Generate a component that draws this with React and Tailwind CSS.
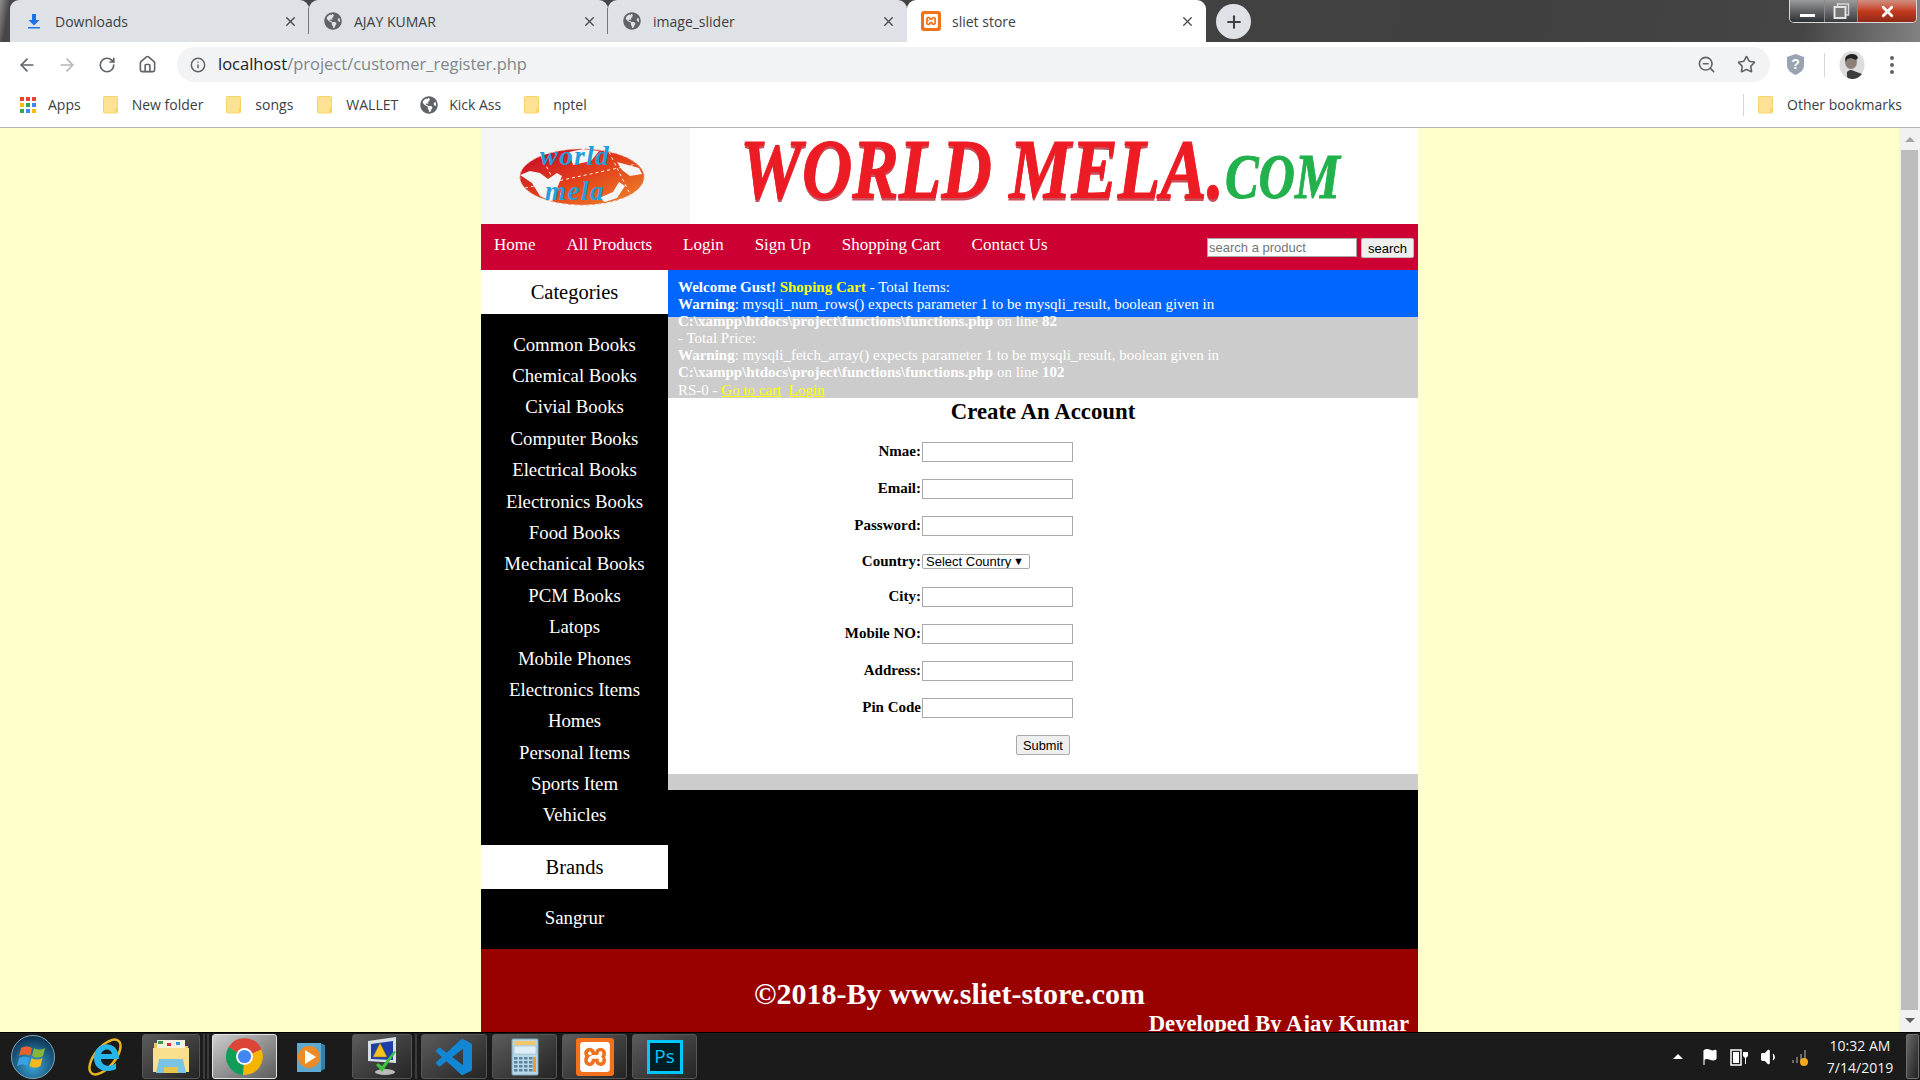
import React from 'react';
import { ArrowLeft, ArrowRight, RotateCw, Home, Info, Star, X, Plus, Flag, Volume1, ZoomOut } from 'lucide-react';
import { FaGlobeAmericas } from 'react-icons/fa';
import { SiXampp } from 'react-icons/si';

const categories = [
    'Common Books', 'Chemical Books', 'Civial Books', 'Computer Books', 'Electrical Books', 'Electronics Books',
    'Food Books', 'Mechanical Books', 'PCM Books', 'Latops', 'Mobile Phones', 'Electronics Items',
    'Homes', 'Personal Items', 'Sports Item', 'Vehicles',
];

const fields = [
    { label: 'Nmae:' },
    { label: 'Email:' },
    { label: 'Password:' },
    { label: 'Country:', select: true },
    { label: 'City:' },
    { label: 'Mobile NO:' },
    { label: 'Address:' },
    { label: 'Pin Code' },
];

const Folder = () => (
    <svg width="16" height="19" viewBox="0 0 16 19" className="shrink-0">
        <path d="M1.500 1.500h12a1 1 0 0 1 1 1V17a1 1 0 0 1-1 1h-12a1 1 0 0 1-1-1V2.500a1 1 0 0 1 1-1z" fill="#fde293" stroke="#f6d568" />
        <path d="M12.500 13h2v4h-2z" fill="#f9d25a" />
    </svg>
);

const Download = () => (
    <svg width="18" height="16" viewBox="0 0 18 16" className="shrink-0">
        <path d="M7 1h4v6h3.500L9 12.500 3.500 7H7z" fill="#1a73e8" />
        <path d="M3 14h12v1.500H3z" fill="#1a73e8" />
    </svg>
);

const XamppBadge = ({ size = 20, icon = 14 }) => (
    <div className="flex shrink-0 items-center justify-center rounded-[3px] bg-[#f2711c]" style={{ width: size, height: size }}>
        <SiXampp size={icon} color="#fff" />
    </div>
);

const Tab = ({ icon, title, active, divider }) => (
    <div className={`relative flex h-[42px] w-[299px] shrink-0 items-center rounded-t-[9px] pr-[11px] ${active ? 'bg-white pl-[14px]' : 'bg-[#dee1e6] pl-[15px]'}`}>
        {icon}
        <span className={`flex-1 font-['Open_Sans'] text-[14px] text-[#3c4043] ${active ? 'ml-[11px]' : 'ml-[12px]'}`}>{title}</span>
        <X size={15} strokeWidth={2.2} className="text-[#4a4d50]" />
        {divider && <div className="absolute right-0 top-[8px] h-[26px] w-px bg-[#75787c]" />}
    </div>
);

const WindowControls = () => (
    <div className="ml-auto mr-[3px] flex h-[23px] w-[128px] self-start overflow-hidden rounded-b-[5px] border border-t-0 border-[#d8d8d8]">
        <div className="flex w-[35px] items-end justify-center border-r border-[#8a8a8a] bg-gradient-to-b from-[#9c9c9c] to-[#2e3136] pb-[5px]">
            <div className="h-[3px] w-[15px] bg-white" />
        </div>
        <div className="flex w-[33px] items-center justify-center border-r border-[#8a8a8a] bg-gradient-to-b from-[#9c9c9c] to-[#3a3c40]">
            <svg width="17" height="17" viewBox="0 0 17 17">
                <rect x="4.500" y="1" width="11" height="11" fill="none" stroke="#d6d6d6" strokeWidth="1.500" />
                <rect x="1.500" y="4" width="11" height="11" fill="#777" stroke="#e4e4e4" strokeWidth="2" />
            </svg>
        </div>
        <div className="flex flex-1 items-center justify-center bg-gradient-to-b from-[#cf8d80] via-[#c63a1e] to-[#8d2a17]">
            <X size={17} strokeWidth={4} className="text-white" />
        </div>
    </div>
);

const TabStrip = () => (
    <div className="flex h-[42px] shrink-0 bg-[linear-gradient(100deg,#8f8f8f_0px,#474747_10px,#404040_1500px,#454545_1780px,#8e8e8e_1920px)] pl-[10px]">
        <Tab icon={<Download />} title="Downloads" divider />
        <Tab icon={<FaGlobeAmericas size={18} color="#5f6368" />} title="AJAY KUMAR" divider />
        <Tab icon={<FaGlobeAmericas size={18} color="#5f6368" />} title="image_slider" />
        <Tab icon={<XamppBadge />} title="sliet store" active />
        <div className="ml-[10px] mt-[4px] flex h-[35px] w-[35px] items-center justify-center rounded-full bg-[#dee1e6]">
            <Plus size={20} strokeWidth={2.5} className="text-[#3c4043]" />
        </div>
        <WindowControls />
    </div>
);

const Toolbar = () => (
    <div className="flex h-[43px] shrink-0 items-center bg-white pl-[17px] pr-[11px] pt-[2px] text-[#5f6368]">
        <ArrowLeft size={20} strokeWidth={2} />
        <ArrowRight size={20} strokeWidth={2} className="ml-[20px] text-[#b4b7bb]" />
        <RotateCw size={18} strokeWidth={2.2} className="ml-[21px]" />
        <Home size={19} strokeWidth={2} className="ml-[22px]" />
        <div className="ml-[20px] flex h-[35px] w-[1593px] items-center rounded-full bg-[#f1f3f4] pl-[13px] pr-[14px]">
            <Info size={16} strokeWidth={2.2} />
            <span className="ml-[12px] flex-1 font-['Open_Sans'] text-[16.500px] text-[#80868b]">
                <span className="text-[#202124]">localhost</span>/project/customer_register.php
            </span>
            <ZoomOut size={19} strokeWidth={2} />
            <Star size={19} strokeWidth={2} className="ml-[21px]" />
        </div>
        <svg width="19" height="23" viewBox="0 0 19 23" className="ml-[16px]">
            <path d="M9.500 1L18 4v8c0 5-4 8-8.500 10C5 20 1 17 1 12V4z" fill="#9aa3b2" />
            <text x="9.500" y="16" textAnchor="middle" fontSize="14" fontWeight="700" fill="#fff" fontFamily="Liberation Sans, sans-serif">?</text>
        </svg>
        <div className="ml-[19px] h-[24px] w-px bg-[#d3d5d8]" />
        <svg width="26" height="28" viewBox="0 0 26 28" className="ml-[14px]">
            <ellipse cx="13" cy="14" rx="12.500" ry="14" fill="#dcdcdc" />
            <ellipse cx="12" cy="11" rx="6" ry="7" fill="#8c8079" />
            <path d="M6 8c1-6 12-7 13-1l-2 2-5-2-4 1-1 3z" fill="#222" />
            <path d="M8 21c3-3 5-2 7-1l8 3c-2 3-6 5-10 5-2 0-4-1-5-2z" fill="#3d3d3d" />
        </svg>
        <div className="ml-[25px] flex flex-col gap-[3px]">
            <div className="h-[4px] w-[4px] rounded-full bg-[#5f6368]" />
            <div className="h-[4px] w-[4px] rounded-full bg-[#5f6368]" />
            <div className="h-[4px] w-[4px] rounded-full bg-[#5f6368]" />
        </div>
    </div>
);

const AppsIcon = () => (
    <div className="grid h-[16px] w-[16px] grid-cols-3 gap-[2px]">
        {['#ea4335', '#ea4335', '#ea4335', '#fbbc04', '#34a853', '#4285f4', '#34a853', '#4285f4', '#fbbc04'].map((c, i) => (
            <div key={i} style={{ backgroundColor: c }} />
        ))}
    </div>
);

const Bookmark = ({ icon, label, className }) => (
    <div className={`flex items-center gap-[13px] ${className}`}>
        {icon}
        <span>{label}</span>
    </div>
);

const Bookmarks = () => (
    <div className="flex h-[43px] shrink-0 items-center border-b border-[#b4b4b4] bg-white pb-[3px] pl-[20px] pr-[18px] font-['Open_Sans'] text-[14px] text-[#3c4043]">
        <Bookmark icon={<AppsIcon />} label="Apps" className="!gap-[12px]" />
        <Bookmark icon={<Folder />} label="New folder" className="ml-[22px]" />
        <Bookmark icon={<Folder />} label="songs" className="ml-[23px]" />
        <Bookmark icon={<Folder />} label="WALLET" className="ml-[24px]" />
        <Bookmark icon={<FaGlobeAmericas size={18} color="#5f6368" />} label="Kick Ass" className="ml-[22px] !gap-[11px]" />
        <Bookmark icon={<Folder />} label="nptel" className="ml-[23px]" />
        <div className="ml-auto h-[22px] w-px bg-[#d3d5d8]" />
        <Bookmark icon={<Folder />} label="Other bookmarks" className="ml-[14px]" />
    </div>
);

const Logo = () => (
    <div className="h-[96px] w-[209px] shrink-0 bg-[#f5f5f5]">
        <svg width="209" height="96" viewBox="0 0 209 96">
            <defs>
                <linearGradient id="globeFill" x1="0" y1="0" x2="1" y2="1">
                    <stop offset="0" stopColor="#c4042c" />
                    <stop offset="0.5" stopColor="#e2401a" />
                    <stop offset="1" stopColor="#ef8a2a" />
                </linearGradient>
            </defs>
            <ellipse cx="101" cy="49" rx="62" ry="28" fill="url(#globeFill)" />
            <path d="M39 47l10-4 10 2 8 6 9-6 5 3-4 10-6 16-12-6-8-13zM88 24l14-3 16 2-8 10-18 4zM136 34l22 6 3 6-12 2-8-6zM118 70l14-6 6-10 6 4-8 12-12 4z" fill="#f5f5f5" />
            <path d="M60 28L82 70M128 24l22 44M44 60l112-24" fill="none" stroke="#f5f5f5" strokeDasharray="3 3" />
            <ellipse cx="101" cy="49" rx="62" ry="28" fill="none" stroke="#e9967a" strokeDasharray="3 3" />
            <text x="94" y="37" textAnchor="middle" fontSize="27" letterSpacing="1.500" fontStyle="italic" fontWeight="700" fill="#1f9fdc" fontFamily="Liberation Serif, serif">world</text>
            <text x="94" y="72" textAnchor="middle" fontSize="27" letterSpacing="1.500" fontStyle="italic" fontWeight="700" fill="#1f9fdc" fontFamily="Liberation Serif, serif">mela</text>
        </svg>
    </div>
);

const Header = () => (
    <div className="flex h-[96px] bg-white">
        <Logo />
        <div className="flex items-baseline whitespace-nowrap pl-[50px] font-['Liberation_Serif',serif] font-bold italic leading-none">
            <span className="inline-block w-[485px] origin-left scale-x-[0.83] text-[84px] text-[#ed1c24] [-webkit-text-stroke:1px_#ed1c24] [text-shadow:0_3px_0_#c9505a]">WORLD MELA.</span>
            <span className="inline-block w-[115px] origin-left scale-x-[0.8] text-[63px] text-[#22b14c] [-webkit-text-stroke:1px_#22b14c]">COM</span>
        </div>
    </div>
);

const NavBar = () => (
    <div className="flex h-[46px] items-center bg-[#cc0033] pl-[13px] pr-[4px] font-['Liberation_Serif',serif] text-[17px] text-white">
        <div className="flex gap-[31px] pb-[4px]">
            <span>Home</span>
            <span>All Products</span>
            <span>Login</span>
            <span>Sign Up</span>
            <span>Shopping Cart</span>
            <span>Contact Us</span>
        </div>
        <div className="ml-auto flex items-center gap-[4px] pt-[1px] font-['Liberation_Sans',sans-serif] text-[13px]">
            <input
                placeholder="search a product"
                className="h-[19px] w-[150px] border border-[#a9a9a9] bg-white px-px text-black placeholder:text-[#757575] focus:outline-none"
            />
            <button className="h-[20px] w-[53px] rounded-[2px] border border-[#bdbdbd] bg-[#efefef] text-[13px] text-black">search</button>
        </div>
    </div>
);

const SideHeading = ({ title }) => (
    <div className="flex h-[44px] items-center justify-center bg-white text-[20.500px] text-black">{title}</div>
);

const Sidebar = () => (
    <div className="w-[187px] shrink-0 bg-black text-center font-['Liberation_Serif',serif] text-[18.800px] text-white">
        <SideHeading title="Categories" />
        <div className="pt-[15px] pb-[14px]">
            {categories.map((c) => (
                <div key={c} className="flex h-[31.400px] items-center justify-center">{c}</div>
            ))}
        </div>
        <SideHeading title="Brands" />
        <div className="flex h-[58px] items-center justify-center">Sangrur</div>
    </div>
);

const CartInfo = () => (
    <>
        <div className="h-[47px] bg-[#0066ff] px-[10px] pt-[9px] font-['Liberation_Serif',serif] text-[15px] leading-[17.100px] text-white">
            <b>Welcome Gust!</b> <b className="text-[#ffff00]">Shoping Cart</b> - Total Items:
            <br />
            <b>Warning</b>: mysqli_num_rows() expects parameter 1 to be mysqli_result, boolean given in
            <br />
            <b>C:\xampp\htdocs\project\functions\functions.php</b> on line <b>82</b>
            <br />
            - Total Price:
            <br />
            <b>Warning</b>: mysqli_fetch_array() expects parameter 1 to be mysqli_result, boolean given in
            <br />
            <b>C:\xampp\htdocs\project\functions\functions.php</b> on line <b>102</b>
            <br />
            RS-0 - <a className="text-[#ffff00] underline">Go to cart</a>&nbsp; <a className="text-[#ffff00] underline">Login</a>
        </div>
        <div className="h-[81px] bg-[#cccccc]" />
    </>
);

const RegisterForm = () => (
    <div className="h-[376px] bg-white font-['Liberation_Serif',serif] text-black">
        <h1 className="text-center text-[22.800px] font-bold leading-[28px]">Create An Account</h1>
        <div className="pt-[16px]">
            {fields.map((f) => (
                <div key={f.label} className={`flex items-start ${f.select ? 'h-[34px]' : 'h-[37px]'}`}>
                    <label className={`w-[253px] text-right text-[15px] font-bold leading-[17px] ${f.select ? '' : 'pt-px'}`}>{f.label}</label>
                    {f.select ? (
                        <div className="relative ml-px mt-px">
                            <select className="block h-[15px] w-[108px] appearance-none rounded-[2px] border border-[#a9a9a9] bg-white pl-[3px] font-['Liberation_Sans',sans-serif] text-[13px] leading-[13px] focus:outline-none">
                                <option>Select Country</option>
                            </select>
                            <span className="absolute right-[6px] top-[2px] text-[11px] leading-[11px]">▼</span>
                        </div>
                    ) : (
                        <input className="ml-px h-[20px] w-[151px] border border-[#a9a9a9] bg-white focus:outline-none" />
                    )}
                </div>
            ))}
            <div className="pl-[348px]">
                <button className="block h-[20px] w-[54px] rounded-[2px] border border-[#a9a9a9] bg-[#efefef] font-['Liberation_Sans',sans-serif] text-[12.800px]">Submit</button>
            </div>
        </div>
    </div>
);

const Footer = () => (
    <div className="h-[120px] bg-[#990000] pt-[28px] font-['Liberation_Serif',serif] font-bold text-white">
        <div className="text-center text-[30px] leading-[34px]">©2018-By www.sliet-store.com</div>
        <div className="pr-[9px] text-right text-[22.700px] leading-[26px]">Developed By Ajay Kumar</div>
    </div>
);

const Scrollbar = () => (
    <div className="flex w-[21px] shrink-0 flex-col items-center bg-[#f1f1f1]">
        <div className="mt-[9px] h-0 w-0 border-x-[5px] border-b-[5px] border-x-transparent border-b-[#a3a3a3]" />
        <div className="mt-[8px] h-[860px] w-[17px] bg-[#bdbdbd]" />
        <div className="mt-[8px] h-0 w-0 border-x-[5px] border-t-[5px] border-x-transparent border-t-[#5f5f5f]" />
    </div>
);

const WinOrb = () => (
    <svg width="46" height="46" viewBox="0 0 46 46" className="shrink-0">
        <defs>
            <radialGradient id="orbFill" cx="0.5" cy="0.7" r="0.7">
                <stop offset="0" stopColor="#3aa6d8" />
                <stop offset="1" stopColor="#0b2f4c" />
            </radialGradient>
        </defs>
        <circle cx="23" cy="23" r="21.500" fill="url(#orbFill)" stroke="#7fa8bd" />
        <path d="M11 14c4-2 7-2 11 0l-2 8c-4-2-7-2-11 0z" fill="#e8632b" />
        <path d="M24 14c4 2 7 2 11 0l-2 8c-4 2-7 2-11 0z" fill="#89b53a" />
        <path d="M9 24c4-2 7-2 10.500 0l-2 8c-4-2-7-2-10.500 0z" fill="#3aa0e0" />
        <path d="M21.500 24c4 2 7 2 11 0l-2 8c-4 2-7 2-11 0z" fill="#f5b91e" />
    </svg>
);

const IeIcon = () => (
    <svg width="38" height="42" viewBox="0 0 38 42">
        <ellipse cx="19" cy="21" rx="10" ry="21" transform="rotate(40 19 21)" fill="none" stroke="#eab320" strokeWidth="2.500" />
        <path d="M33 23H15c0 7 9 9 15 4v6c-10 5-22 1-22-11 0-11 10-16 17-13 5 2 8 7 8 14zM15 18h11c-1-6-9-6-11 0z" fill="#27b5ea" />
    </svg>
);

const ExplorerIcon = () => (
    <svg width="38" height="36" viewBox="0 0 38 36">
        <path d="M2 4h13l2 3h19v25H2z" fill="#e9c766" />
        <rect x="5" y="1" width="28" height="8" fill="#f6f1dd" />
        <path d="M6 2h5v3H6z" fill="#3c9a4e" />
        <path d="M15 4h4v3h-4z" fill="#c33" />
        <path d="M24 3h4v3h-4z" fill="#39c" />
        <path d="M1 9h36v24H1z" fill="#f9e08f" />
        <path d="M7 20h24l3 14H4z" fill="#7cc4e6" />
        <path d="M12 28h14v6H12z" fill="#e8c64e" />
    </svg>
);

const ChromeIcon = () => (
    <svg width="37" height="37" viewBox="0 0 48 48">
        <path d="M24 24L3.200 12A24 24 0 0 1 46 15z" fill="#db4437" />
        <path d="M24 24L3.200 12A24 24 0 0 0 22 48z" fill="#0f9d58" />
        <path d="M24 24L46 15A24 24 0 0 1 22 48z" fill="#f4b400" />
        <circle cx="24" cy="24" r="11" fill="#fff" />
        <circle cx="24" cy="24" r="8.500" fill="#4285f4" />
    </svg>
);

const MediaIcon = () => (
    <svg width="32" height="34" viewBox="0 0 32 34">
        <path d="M25 3l5 2v24l-5 2z" fill="#3a7da8" />
        <rect x="2" y="3" width="24" height="29" fill="#5fa8cf" />
        <circle cx="14" cy="17" r="11" fill="#f08a24" />
        <path d="M10 10l11 7-11 7z" fill="#fff" />
    </svg>
);

const ActionCenterIcon = () => (
    <svg width="38" height="42" viewBox="0 0 38 42">
        <path d="M5 5l28-4v26l-28-2z" fill="#d8dee6" />
        <path d="M8 8l22-3v19l-22-1z" fill="#1f3fa8" />
        <path d="M17 7l7 14H10z" fill="#f6c21e" stroke="#8a6d00" strokeWidth="0.500" />
        <ellipse cx="22" cy="36" rx="10" ry="3" fill="#bbb" />
        <path d="M13 29l6 7 14-20-2-1-12 15-4-3z" fill="#3cc13c" />
    </svg>
);

const VsCodeIcon = () => (
    <svg width="36" height="36" viewBox="0 0 24 24">
        <path d="M23.150 2.587L18.210.21a1.494 1.494 0 0 0-1.705.29l-9.460 8.630-4.120-3.128a.999.999 0 0 0-1.276.057L.327 7.261A1 1 0 0 0 .326 8.740L3.899 12 .326 15.260a1 1 0 0 0 .001 1.479L1.650 17.940a.999.999 0 0 0 1.276.057l4.120-3.128 9.460 8.630a1.492 1.492 0 0 0 1.704.29l4.942-2.377A1.500 1.500 0 0 0 24 20.060V3.939a1.500 1.500 0 0 0-.850-1.352zm-5.146 14.861L10.826 12l7.178-5.448v10.896z" fill="#1487d4" />
    </svg>
);

const CalcIcon = () => (
    <svg width="28" height="38" viewBox="0 0 28 38">
        <rect x="1" y="1" width="26" height="36" rx="1" fill="#b9d7e8" stroke="#7ea6bd" />
        <rect x="3" y="3" width="22" height="4" fill="#f3c66a" />
        <rect x="3" y="8" width="22" height="8" fill="#dfeef6" stroke="#8fb0c4" strokeWidth="0.500" />
        <g fill="#58849f">
            {[19, 23, 27, 31].map((y) => [3, 8, 13, 18].map((x) => <rect key={`${x}-${y}`} x={x} y={y} width="3.500" height="2.500" />))}
        </g>
        <rect x="22" y="19" width="3" height="15" fill="#e89a3c" />
    </svg>
);

const PsIcon = () => (
    <div className="flex h-[34px] w-[36px] items-center justify-center border-[3px] border-[#00c8ff] bg-[#001d26] font-['Open_Sans'] text-[19px] leading-none text-[#00c8ff]">Ps</div>
);

const TaskButton = ({ children, className, bright }) => (
    <div className={`flex h-[45px] shrink-0 items-center justify-center rounded-[3px] border ${bright ? 'border-[#e4e4e4] bg-gradient-to-br from-[#cfcfcf] to-[#5c5c5c]' : 'border-[#555555] bg-gradient-to-br from-[#5c5c5c] to-[#252525]'} ${className}`}>
        {children}
    </div>
);

const Taskbar = () => (
    <div className="flex h-[48px] shrink-0 items-center border-t border-[#000000] bg-[#1b1b1b] pl-[10px]">
        <WinOrb />
        <div className="ml-[30px] flex w-[38px] justify-center"><IeIcon /></div>
        <TaskButton className="ml-[18px] w-[58px]"><ExplorerIcon /></TaskButton>
        <div className="ml-[3px] h-[45px] w-[2px] bg-[#3c3c3c]" />
        <div className="ml-[2px] h-[45px] w-[2px] bg-[#3c3c3c]" />
        <TaskButton bright className="ml-[3px] w-[65px]"><ChromeIcon /></TaskButton>
        <div className="ml-[18px] flex w-[32px] justify-center"><MediaIcon /></div>
        <TaskButton className="ml-[25px] w-[60px]"><ActionCenterIcon /></TaskButton>
        <div className="ml-[3px] h-[45px] w-[2px] bg-[#3c3c3c]" />
        <TaskButton className="ml-[4px] w-[66px]"><VsCodeIcon /></TaskButton>
        <TaskButton className="ml-[5px] w-[65px]"><CalcIcon /></TaskButton>
        <TaskButton className="ml-[5px] w-[65px]"><XamppBadge size={38} icon={30} /></TaskButton>
        <TaskButton className="ml-[5px] w-[65px]"><PsIcon /></TaskButton>
        <div className="ml-auto flex items-center text-white">
            <div className="h-0 w-0 border-x-[5px] border-b-[5px] border-x-transparent border-b-white" />
            <Flag size={18} fill="#fff" strokeWidth={1.500} className="ml-[18px]" />
            <svg width="19" height="19" viewBox="0 0 19 19" className="ml-[11px]">
                <rect x="1" y="3" width="10" height="15" fill="none" stroke="#fff" strokeWidth="1.500" />
                <rect x="3" y="5" width="6" height="11" fill="#fff" />
                <path d="M13 5h5v4l-2 2v6h-1v-6l-2-2z" fill="#fff" />
            </svg>
            <Volume1 size={20} fill="#fff" strokeWidth={1.500} className="ml-[11px]" />
            <svg width="20" height="20" viewBox="0 0 20 20" className="ml-[11px]">
                <path d="M1 13h2v3H1zM5 10h2v6H5zM9 7h2v9H9zM13 3h2v13h-2z" fill="#6a6a6a" />
                <circle cx="13" cy="15" r="4" fill="#f5a81c" />
            </svg>
            <div className="ml-[13px] w-[72px] text-center font-['Open_Sans'] text-[14px] leading-[22px] text-[#f2f2f2]">
                <div>10:32 AM</div>
                <div>7/14/2019</div>
            </div>
            <div className="ml-[10px] h-[45px] w-[13px] rounded-[2px] border border-[#6e6e6e] bg-gradient-to-br from-[#6a6a6a] to-[#222222]" />
            <div className="w-px" />
        </div>
    </div>
);

const App = () => {
    return (
        <div className="flex h-screen w-full flex-col overflow-hidden bg-[#ffffcc]">
            <TabStrip />
            <Toolbar />
            <Bookmarks />
            <div className="flex min-h-0 flex-1 overflow-hidden">
                <div className="min-w-0 flex-1 overflow-hidden">
                    <div className="mx-auto w-[937px]">
                        <Header />
                        <NavBar />
                        <div className="flex h-[679px] bg-black">
                            <Sidebar />
                            <div className="min-w-0 flex-1">
                                <CartInfo />
                                <RegisterForm />
                                <div className="h-[16px] bg-[#cccccc]" />
                            </div>
                        </div>
                        <Footer />
                    </div>
                </div>
                <Scrollbar />
            </div>
            <Taskbar />
        </div>
    );
};

export default App;
